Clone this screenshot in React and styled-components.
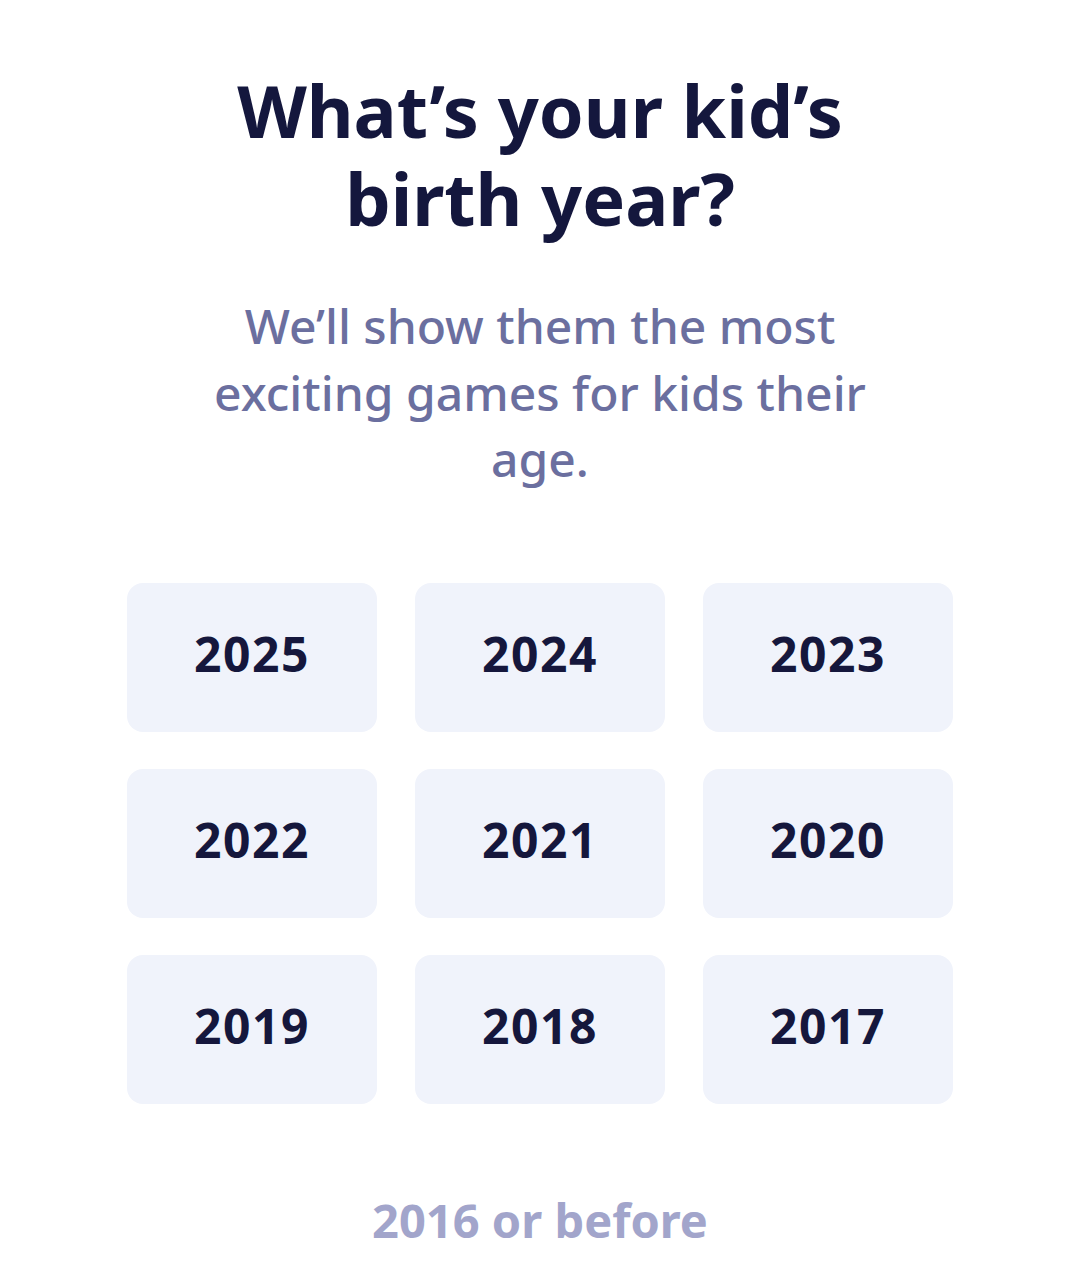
import React from "react";
import styled, { createGlobalStyle } from "styled-components";

const Global = createGlobalStyle`
  html, body { margin: 0; padding: 0; background: #ffffff; }
  body { font-family: "Noto Sans", "Open Sans", sans-serif; }
`;

const Page = styled.main`
  width: 1080px;
  display: flex;
  flex-direction: column;
  align-items: center;
  padding-top: 66px;
`;

const Title = styled.h1`
  margin: 0;
  width: 760px;
  text-align: center;
  font-size: 72px;
  line-height: 88px;
  font-weight: 700;
  color: #14173d;
`;

const Subtitle = styled.p`
  margin: 51px 0 0;
  width: 700px;
  text-align: center;
  font-size: 48px;
  line-height: 66.5px;
  font-weight: 500;
  color: #6b6f9f;
`;

const Grid = styled.div`
  margin-top: 90px;
  display: grid;
  grid-template-columns: repeat(3, 250px);
  grid-auto-rows: 149px;
  column-gap: 38px;
  row-gap: 37px;
`;

const YearButton = styled.button`
  border: none;
  padding: 0 0 7px;
  border-radius: 16px;
  background: #f0f3fb;
  font-family: inherit;
  font-size: 48px;
  letter-spacing: 1.5px;
  font-weight: 700;
  color: #15173c;
  cursor: pointer;
`;

const Fallback = styled.button`
  margin-top: 86px;
  padding: 0 0 4px;
  border: none;
  background: none;
  font-family: inherit;
  font-size: 47px;
  line-height: 60px;
  font-weight: 700;
  color: #a2a5cb;
  cursor: pointer;
`;

const years = [2025, 2024, 2023, 2022, 2021, 2020, 2019, 2018, 2017];

export default function App() {
  return (
    <>
      <Global />
      <Page>
        <Title>What’s your kid’s birth year?</Title>
        <Subtitle>We’ll show them the most exciting games for kids their age.</Subtitle>
        <Grid>
          {years.map((y) => (
            <YearButton key={y}>{y}</YearButton>
          ))}
        </Grid>
        <Fallback>2016 or before</Fallback>
      </Page>
    </>
  );
}
